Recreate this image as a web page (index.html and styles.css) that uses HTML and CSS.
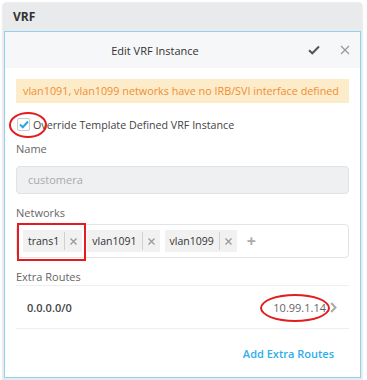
FILE: index.html
```html
<!DOCTYPE html>
<html>
<head>
<meta charset="utf-8">
<link rel="stylesheet" href="styles.css">
</head>
<body>
<div class="card">
  <div class="card-head">VRF</div>
  <div class="panel">
    <div class="panel-head">
      <div class="title">Edit VRF Instance</div>
      <div class="actions">
        <svg class="icon-check" width="12" height="10" viewBox="0 0 12 10"><path d="M1 5.2 L4.3 8.3 L11 1.5" fill="none" stroke="#555" stroke-width="2"/></svg>
        <svg class="icon-x" width="10" height="10" viewBox="0 0 10 10"><path d="M1 1 L9 9 M9 1 L1 9" fill="none" stroke="#999" stroke-width="1.2"/></svg>
      </div>
    </div>
    <div class="body">
      <div class="warning">vlan1091, vlan1099 networks have no IRB/SVI interface defined</div>
      <div class="check-row">
        <span class="checkbox"><svg width="10" height="9" viewBox="0 0 10 9"><path d="M1 4.5 L3.8 7.2 L9 1.5" fill="none" stroke="#27a6e6" stroke-width="2"/></svg></span>
        <span class="check-label">Override Template Defined VRF Instance</span>
        <span class="mark-ellipse mark-check"></span>
      </div>
      <div class="label">Name</div>
      <div class="input">customera</div>
      <div class="label">Networks</div>
      <div class="tags">
        <span class="tag"><span class="tag-text">trans1</span><span class="tag-x"><svg width="7" height="7" viewBox="0 0 7 7"><path d="M0.5 0.5 L6.5 6.5 M6.5 0.5 L0.5 6.5" fill="none" stroke="#999" stroke-width="1.3"/></svg></span></span>
        <span class="tag"><span class="tag-text">vlan1091</span><span class="tag-x"><svg width="7" height="7" viewBox="0 0 7 7"><path d="M0.5 0.5 L6.5 6.5 M6.5 0.5 L0.5 6.5" fill="none" stroke="#999" stroke-width="1.3"/></svg></span></span>
        <span class="tag"><span class="tag-text">vlan1099</span><span class="tag-x"><svg width="7" height="7" viewBox="0 0 7 7"><path d="M0.5 0.5 L6.5 6.5 M6.5 0.5 L0.5 6.5" fill="none" stroke="#999" stroke-width="1.3"/></svg></span></span>
        <span class="plus">+</span>
        <span class="mark-rect"></span>
      </div>
      <div class="label label-routes">Extra Routes</div>
      <div class="route">
        <span class="route-dest">0.0.0.0/0</span>
        <span class="route-hop">10.99.1.14</span>
        <svg class="chev" width="7" height="11" viewBox="0 0 7 11"><path d="M1.2 1 L5.5 5.5 L1.2 10" fill="none" stroke="#aaa" stroke-width="2"/></svg>
        <span class="mark-ellipse mark-hop"></span>
      </div>
      <div class="add-row"><span class="add-link">Add Extra Routes</span></div>
    </div>
  </div>
</div>
</body>
</html>
```

FILE: styles.css
```css
* { box-sizing: border-box; }
html, body { margin: 0; padding: 0; background: #fff; }
body {
  font-family: "Open Sans", "Noto Sans", sans-serif;
  color: #333;
  font-size: 11px;
  width: 367px;
  height: 380px;
  overflow: hidden;
}
.card {
  margin: 3px 5px 0 3px;
  background: #e9eaeb;
  border-radius: 4px 4px 0 0;
  box-shadow: 0 0 2px rgba(0,0,0,0.25);
  padding: 0 1px 3px 1px;
}
.card-head {
  height: 28px;
  line-height: 28px;
  padding-left: 9px;
  font-weight: 700;
  font-size: 12px;
  color: #333;
}
.panel {
  border: 1px solid #8fd3f1;
  background: #fff;
}
.panel-head {
  height: 36px;
  background: #f6f7f8;
  display: flex;
  align-items: center;
}
.title {
  flex: 1;
  text-align: center;
  font-size: 11px;
  color: #333;
}
.actions {
  width: 55px;
  display: flex;
  align-items: center;
  gap: 20px;
  padding-left: 3px;
}
.body { padding: 11px 11px 0 11px; }
.warning {
  background: #fdecc9;
  color: #f08c33;
  font-size: 10.8px;
  height: 24px;
  line-height: 24px;
  padding-left: 7px;
  white-space: nowrap;
}
.check-row {
  position: relative;
  display: flex;
  align-items: center;
  margin-top: 15px;
  height: 13px;
}
.checkbox {
  width: 13px;
  height: 13px;
  border: 1px solid #c9cbcd;
  border-radius: 2px;
  display: flex;
  align-items: center;
  justify-content: center;
  margin-left: 1px;
  background: #fff;
}
.check-label { margin-left: 3px; color: #444; font-size: 10.7px; }
.mark-ellipse {
  position: absolute;
  border: 2.5px solid #e31d1d;
  border-radius: 50%;
}
.mark-check { left: -7px; top: -6px; width: 38px; height: 26px; }
.label {
  color: #666;
  font-size: 11px;
  margin-top: 10px;
  line-height: 16px;
}
.input {
  margin-top: 9px;
  height: 28px;
  line-height: 26px;
  background: #eef0f2;
  border: 1px solid #e0e2e4;
  border-radius: 4px;
  color: #aaa;
  padding-left: 11px;
  font-size: 11px;
}
.label + .tags { margin-top: 3px; }
.input + .label { margin-top: 11px; }
.tags {
  position: relative;
  height: 34px;
  border: 1px solid #e2e4e6;
  border-radius: 4px;
  display: flex;
  align-items: center;
  padding-left: 6px;
  gap: 5px;
}
.tag {
  display: flex;
  align-items: center;
  background: #f1f1f2;
  height: 22px;
  font-size: 10.5px;
  color: #333;
}
.tag-text { padding: 0 5px 0 5px; border-right: 1px solid #cfd1d3; line-height: 18px; }
.tag-x { width: 17px; display: flex; align-items: center; justify-content: center; }
.plus { color: #aaa; font-size: 16px; margin-left: 5px; font-weight: 700; }
.mark-rect {
  position: absolute;
  left: 0px;
  top: -2px;
  width: 69px;
  height: 38px;
  border: 2.5px solid #e31d1d;
}
.label-routes { margin-top: 11px; }
.route {
  position: relative;
  height: 44px;
  border-top: 1px solid #eceef0;
  border-bottom: 1px solid #eceef0;
  display: flex;
  align-items: center;
  padding-left: 11px;
}
.route-dest { flex: 1; font-weight: 600; color: #444; font-size: 11px; }
.route-hop { color: #666; font-size: 11px; margin-right: 4px; }
.chev { margin-right: 12px; }
.mark-hop { left: 244px; top: 8px; width: 70px; height: 28px; }
.add-row {
  height: 48px;
  display: flex;
  align-items: center;
  justify-content: flex-end;
  padding-right: 15px;
}
.add-link { color: #2eaeea; font-weight: 600; font-size: 11px; }
```
